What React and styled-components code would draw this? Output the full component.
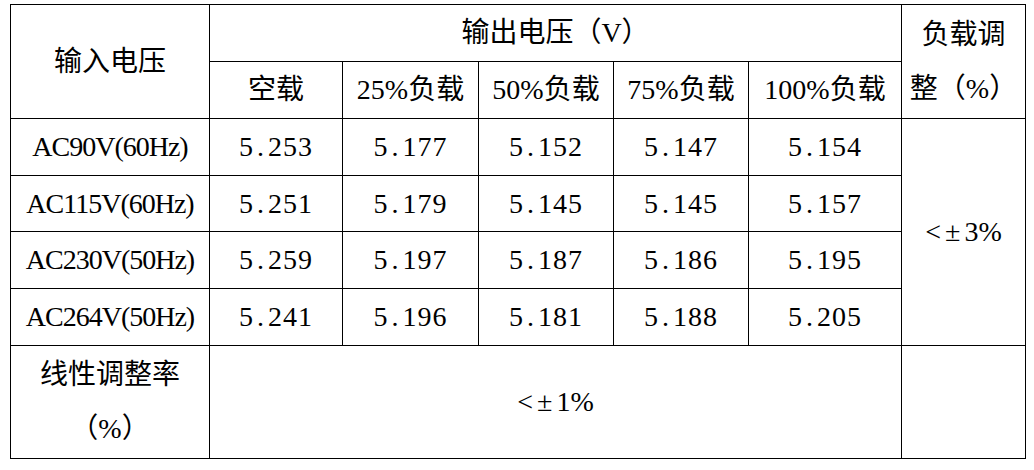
import React from "react";
import styled, { createGlobalStyle } from "styled-components";

const Global = createGlobalStyle`
  html, body { margin: 0; padding: 0; background: #fff; }
`;

const Page = styled.div`
  padding: 4px 0 0 10px;
`;

const Grid = styled.div`
  display: grid;
  grid-template-columns: 199px 133px 136px 135px 135px 153px 124px;
  grid-template-rows: 57px 57px 57px 56px 57px 57px 113px;
  width: max-content;
  border-top: 1px solid #000;
  border-left: 1px solid #000;
  font-family: "Liberation Serif", "Noto Sans CJK SC", serif;
  font-size: 28px;
  font-weight: 400;
  color: #000;
`;

const Cell = styled.div`
  display: flex;
  align-items: center;
  justify-content: center;
  text-align: center;
  box-sizing: border-box;
  min-width: 0;
  padding: 0 7px;
  line-height: 54px;
  border-right: 1px solid #000;
  border-bottom: 1px solid #000;
  grid-column: span ${(p) => p.$cols || 1};
  grid-row: span ${(p) => p.$rows || 1};
`;

const Label = styled.span`
  letter-spacing: -1px;
`;

const Num = styled.span`
  font-family: "Liberation Serif", serif;
  letter-spacing: 1px;
`;

const Dot = styled.span`
  display: inline-block;
  width: 14px;
`;

const Pm = styled.span`
  margin: 0 4px;
`;

const loads = ["空载", "25%负载", "50%负载", "75%负载", "100%负载"];

const rows = [
  ["AC90V(60Hz)", ["5.253", "5.177", "5.152", "5.147", "5.154"]],
  ["AC115V(60Hz)", ["5.251", "5.179", "5.145", "5.145", "5.157"]],
  ["AC230V(50Hz)", ["5.259", "5.197", "5.187", "5.186", "5.195"]],
  ["AC264V(50Hz)", ["5.241", "5.196", "5.181", "5.188", "5.205"]],
];

const Value = ({ v }) => {
  const [i, f] = v.split(".");
  return (
    <Num>
      {i}
      <Dot>.</Dot>
      {f}
    </Num>
  );
};

export default function App() {
  return (
    <>
      <Global />
      <Page>
        <Grid>
          <Cell $rows={2}>输入电压</Cell>
          <Cell $cols={5}>输出电压（V）</Cell>
          <Cell $rows={2}>负载调整（%）</Cell>
          {loads.map((l) => (
            <Cell key={l}>{l}</Cell>
          ))}
          {rows.map(([label, vals], ri) => (
            <React.Fragment key={label}>
              <Cell>
                <Label>{label}</Label>
              </Cell>
              {vals.map((v, i) => (
                <Cell key={i}>
                  <Value v={v} />
                </Cell>
              ))}
              {ri === 0 && (
                <Cell $rows={4}>
                  &lt;<Pm>±</Pm>3%
                </Cell>
              )}
            </React.Fragment>
          ))}
          <Cell>线性调整率（%）</Cell>
          <Cell $cols={5}>
            &lt;<Pm>±</Pm>1%
          </Cell>
          <Cell />
        </Grid>
      </Page>
    </>
  );
}
